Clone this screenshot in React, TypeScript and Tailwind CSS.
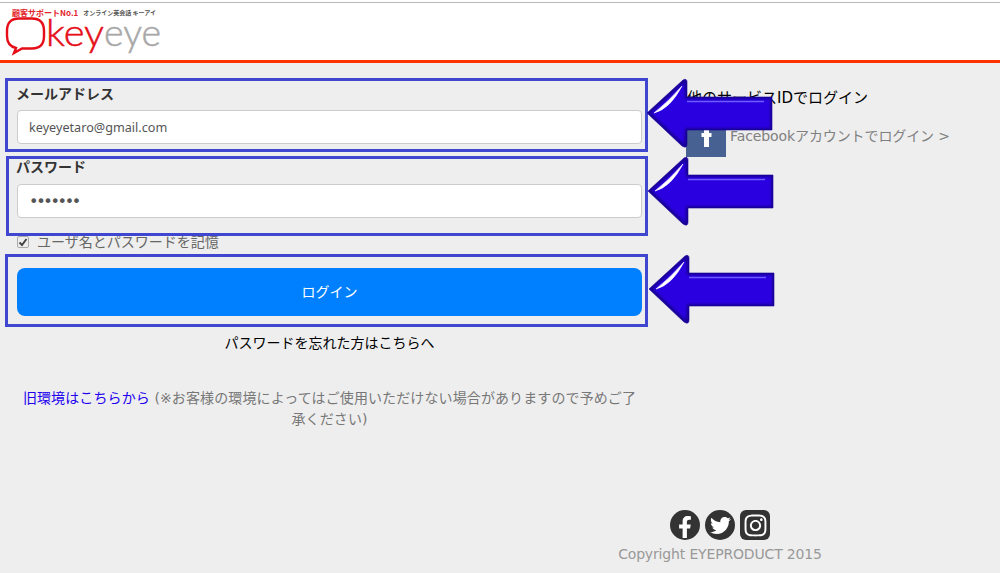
import React from "react";
import { FaFacebookF, FaInstagram, FaTwitter } from "react-icons/fa";

const jp = "font-['Verdana','DejaVu_Sans','Noto_Sans_CJK_JP',sans-serif]";

const Arrow: React.FunctionComponent<{ id: string; className: string }> = ({ id, className }) => {
    return (
        <svg className={className} width="128" height="72" viewBox="0 0 128 72">
            <defs>
                <filter id={`${id}-soft`} x="-10%" y="-10%" width="120%" height="120%">
                    <feGaussianBlur stdDeviation="1.2" />
                </filter>
            </defs>
            <path
                d="M1 35 L37 2 Q41 0 41 4 L41 19 L126 19 L126 52 L41 52 L41 66 Q41 71 36 68 Z"
                fill="#1a0098"
                stroke="#1a0098"
                strokeWidth="0.6"
                strokeLinejoin="round"
            />
            <path d="M5 35 L38 5 L39 21 L124 21 L124 50 L39 50 L38 66 Z" fill="#2a00e0" filter={`url(#${id}-soft)`} />
            <path d="M8 35 Q24 31 36 8 Q22 24 8 35 Z" fill="#ffffff" stroke="#ffffff" strokeWidth="0.6" />
            <path d="M41 23.5 L118 23.5" stroke="#6f5cff" strokeWidth="1.5" />
        </svg>
    );
};

const Logo = () => {
    return (
        <div className="flex flex-col">
            <div className="flex items-center gap-[5px] pl-[12px] h-[11px] leading-[11px] whitespace-nowrap font-['Noto_Sans_CJK_JP',sans-serif]">
                <span className="text-[8px] font-bold text-[#e3242b]">顧客サポートNo.1</span>
                <span className="text-[6px] font-bold text-[#555555]">オンライン英会話 キーアイ</span>
            </div>
            <svg width="170" height="48" viewBox="0 0 170 48" className="overflow-visible">
                <path
                    d="M19 0.5 H32 Q44 0.5 44 13 V18 Q44 30.5 32 30.5 H22 L14 35 L16 30 Q7 28 7 18 V13 Q7 0.5 19 0.5 Z"
                    fill="none"
                    stroke="#e60f19"
                    strokeWidth="2.4"
                />
                <text x="46" y="28" fontFamily="Lato, sans-serif" fontWeight="300" fontSize="38" textLength="58" lengthAdjust="spacingAndGlyphs" fill="#e60f19" stroke="#e60f19" strokeWidth="0.5">
                    key
                </text>
                <text x="104" y="28" fontFamily="Lato, sans-serif" fontWeight="300" fontSize="38" textLength="57" lengthAdjust="spacingAndGlyphs" fill="#a8a8a8" stroke="#a8a8a8" strokeWidth="0.5">
                    eye
                </text>
            </svg>
        </div>
    );
};

export default function App() {
    return (
        <div className={`relative w-[1000px] h-[573px] overflow-hidden bg-[#eeeeee] ${jp}`}>
            <header className="h-[63px] bg-white border-b-[3px] border-[#ff3300]">
                <div className="h-[3px] border-b border-[#b8b8b8] bg-white" />
                <div className="pt-[4px]">
                    <Logo />
                </div>
            </header>

            <main className="flex pt-[21px] pl-[17px]">
                <div className="w-[625px]">
                    <label className="block text-[14px] font-bold text-[#333333] leading-[20px] -ml-[1px]">メールアドレス</label>
                    <div className="mt-[6px] h-[34px] rounded-[4px] border border-[#cccccc] bg-white pl-[11px] pt-[1px] flex items-center text-[12.65px] text-[#555555] font-['Noto_Sans',sans-serif]">
                        keyeyetaro@gmail.com
                    </div>
                    <label className="block mt-[13px] text-[14px] font-bold text-[#333333] leading-[20px] -ml-[1px]">パスワード</label>
                    <div className="mt-[7px] h-[34px] rounded-[4px] border border-[#cccccc] bg-white pl-[11px] pt-[1px] flex items-center text-[16px] tracking-[-2.3px] text-[#555555]">
                        •••••••
                    </div>
                    <div className="flex items-center h-[20px] mt-[14px] text-[14px] text-[#666666]">
                        <span className="w-[12px] h-[12px] rounded-[2px] border border-[#aaaaaa] bg-[#eeeeee] flex items-center justify-center">
                            <svg width="10" height="10" viewBox="0 0 10 10">
                                <path d="M1.5 5.5 L4 8 L8.5 2" fill="none" stroke="#444444" strokeWidth="2" />
                            </svg>
                        </span>
                        <span className="ml-[8px]">ユーザ名とパスワードを記憶</span>
                    </div>
                    <button className="mt-[16px] w-full h-[48px] rounded-[8px] bg-[#0080ff] text-white text-[14px]">ログイン</button>
                    <p className="mt-[17px] text-center text-[14px] leading-[20px] text-black">パスワードを忘れた方はこちらへ</p>
                    <p className="mt-[35px] text-center text-[14px] leading-[21px] tracking-[0.11px] text-[#777777] px-[4px]">
                        <a className="text-[#2200ee]">旧環境はこちらから</a> (※お客様の環境によってはご使用いただけない場合がありますので予めご了承ください)
                    </p>
                </div>
                <div className="ml-[45px] pt-[4px]">
                    <h2 className="text-[15px] leading-[20px] text-black">他のサービスIDでログイン</h2>
                    <div className="flex items-center mt-[9px] -ml-[1px]">
                        <span className="w-[40px] h-[40px] bg-[#466192] block">
                            <svg width="40" height="40" viewBox="0 0 40 40">
                                <path d="M18 30 V20 H15.5 V16 H18 V13 Q18 9 22 9 H25 V13 H23 V16 H25.5 V20 H23 V30 Z" fill="#ffffff" />
                            </svg>
                        </span>
                        <span className="ml-[4px] -mt-[2px] text-[14px] tracking-[-0.1px] text-[#808080]">Facebookアカウントでログイン &gt;</span>
                    </div>
                </div>
            </main>

            <footer className="absolute left-[618px] top-[510px] w-[204px] flex flex-col items-center">
                <div className="flex gap-[5px]">
                    <span className="w-[30px] h-[30px] rounded-full bg-[#333333] text-white flex items-center justify-center overflow-hidden">
                        <FaFacebookF className="text-[22px] mt-[3px]" />
                    </span>
                    <span className="w-[30px] h-[30px] rounded-full bg-[#333333] text-white flex items-center justify-center">
                        <FaTwitter className="text-[21px]" />
                    </span>
                    <span className="w-[30px] h-[30px] rounded-[6px] bg-[#333333] text-white flex items-center justify-center">
                        <FaInstagram className="text-[25px]" />
                    </span>
                </div>
                <p className="mt-[5px] text-[14px] leading-[18px] tracking-[-0.16px] text-[#999999] whitespace-nowrap">Copyright EYEPRODUCT 2015</p>
            </footer>

            <div className="absolute left-[5px] top-[78px] w-[643px] h-[74px] border-[3px] border-[#3f47d0]" />
            <div className="absolute left-[6px] top-[156px] w-[642px] h-[80px] border-[3px] border-[#3f47d0]" />
            <div className="absolute left-[5px] top-[254px] w-[643px] h-[73px] border-[3px] border-[#3f47d0]" />

            <Arrow id="a1" className="absolute left-[646px] top-[78px]" />
            <Arrow id="a2" className="absolute left-[647px] top-[156px]" />
            <Arrow id="a3" className="absolute left-[648px] top-[254px]" />
        </div>
    );
}
